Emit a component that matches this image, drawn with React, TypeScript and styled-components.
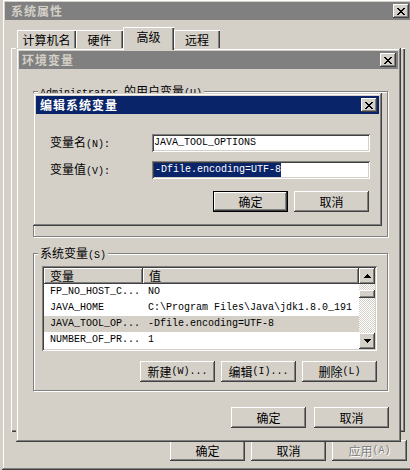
import { FunctionComponent, ReactNode } from "react";
import styled, { createGlobalStyle, css } from "styled-components";

const FACE = "#d4d0c8";
const SHADOW = "#808080";
const DARK = "#404040";
const NAVY = "#0a246a";
const CJK = `"Noto Sans CJK SC", "Liberation Sans", sans-serif`;
const MONO = `"Liberation Mono", "Noto Sans CJK SC", monospace`;

const GlobalStyle = createGlobalStyle`
  body {
    margin: 0;
    background: ${FACE};
    font-family: ${CJK};
    font-size: 12px;
    color: #000;
  }
`;

// classic 3D borders
const frameBevel = css`
  box-shadow: inset -1px -1px ${DARK}, inset 1px 1px ${FACE},
    inset -2px -2px ${SHADOW}, inset 2px 2px #fff;
`;
const buttonBevel = css`
  box-shadow: inset -1px -1px ${DARK}, inset 1px 1px #fff,
    inset -2px -2px ${SHADOW}, inset 2px 2px ${FACE};
`;
const sunkenBevel = css`
  box-shadow: inset 1px 1px ${SHADOW}, inset -1px -1px #fff,
    inset 2px 2px ${DARK}, inset -2px -2px ${FACE};
`;

const Desktop = styled.div`
  position: relative;
  width: 410px;
  height: 470px;
  overflow: hidden;
`;

interface WindowProps {
  $x: number;
  $y: number;
  $w: number;
  $h: number;
}

const Window = styled.div<WindowProps>`
  position: absolute;
  left: ${({ $x }) => $x}px;
  top: ${({ $y }) => $y}px;
  width: ${({ $w }) => $w}px;
  height: ${({ $h }) => $h}px;
  box-sizing: border-box;
  padding: 3px;
  background: ${FACE};
  display: flex;
  flex-direction: column;
  ${frameBevel}
`;

const TitleBar = styled.div<{ $active?: boolean; $indent: number }>`
  flex: none;
  height: 18px;
  display: flex;
  align-items: center;
  justify-content: space-between;
  padding: 0 2px 0 ${({ $indent }) => $indent}px;
  background: ${({ $active }) => ($active ? NAVY : SHADOW)};
  color: ${({ $active }) => ($active ? "#fff" : FACE)};
`;

const TitleText = styled.span`
  font-weight: bold;
  font-size: 12px;
  line-height: 18px;
  letter-spacing: 1px;
`;

const CloseButton = styled.div`
  width: 16px;
  height: 14px;
  box-sizing: border-box;
  background: ${FACE};
  display: flex;
  align-items: center;
  justify-content: center;
  ${buttonBevel}
`;

const X_BITMAP = [
  "XX....XX",
  ".XX..XX.",
  "..XXXX..",
  "...XX...",
  "..XXXX..",
  ".XX..XX.",
  "XX....XX",
];

const CloseGlyph = () => (
  <svg width="8" height="7" viewBox="0 0 8 7" shapeRendering="crispEdges">
    {X_BITMAP.flatMap((row, y) =>
      row.split("").map((c, x) =>
        c === "X" ? <rect key={`${x}-${y}`} x={x} y={y} width="1" height="1" fill="#000" /> : null
      )
    )}
  </svg>
);

const Mono = styled.span`
  font-family: ${MONO};
  font-size: 10px;
`;

const Button = styled.div<{ $default?: boolean; $disabled?: boolean }>`
  width: 75px;
  height: 21px;
  box-sizing: border-box;
  background: ${FACE};
  display: flex;
  align-items: center;
  justify-content: center;
  font-size: 12px;
  line-height: 14px;
  white-space: nowrap;
  color: ${({ $disabled }) => ($disabled ? SHADOW : "#000")};
  text-shadow: ${({ $disabled }) => ($disabled ? "1px 1px #fff" : "none")};
  ${({ $default }) =>
    $default
      ? css`
          box-shadow: inset 0 0 0 1px #000, inset -2px -2px ${DARK},
            inset 2px 2px #fff, inset -3px -3px ${SHADOW};
        `
      : buttonBevel}
`;

const ButtonRow = styled.div<{ $gap: number; $right: number; $top: number }>`
  display: flex;
  justify-content: flex-end;
  gap: ${({ $gap }) => $gap}px;
  padding-right: ${({ $right }) => $right}px;
  margin-top: ${({ $top }) => $top}px;
`;

/* ---------- outer 系统属性 window ---------- */

const TabStrip = styled.div`
  display: flex;
  align-items: flex-end;
  margin: 7px 0 -2px 12px;
  height: 23px;
  position: relative;
  z-index: 1;
`;

const Tab = styled.div<{ $active?: boolean; $w: number }>`
  width: ${({ $w }) => $w}px;
  height: ${({ $active }) => ($active ? 23 : 18)}px;
  box-sizing: border-box;
  background: ${FACE};
  display: flex;
  justify-content: center;
  padding-top: 3px;
  font-size: 12px;
  line-height: 14px;
  margin-bottom: ${({ $active }) => ($active ? 0 : 2)}px;
  box-shadow: inset 1px 1px #fff, inset -1px 0 ${DARK}, inset -2px 0 ${SHADOW};
`;

const TabPanel = styled.div`
  height: 384px;
  margin: 0 6px;
  background: ${FACE};
  box-shadow: inset 1px 1px #fff, inset -1px -1px ${DARK}, inset -2px -2px ${SHADOW};
`;

/* ---------- 环境变量 window ---------- */

const EnvBody = styled.div`
  display: flex;
  flex-direction: column;
  padding: 22px 0 12px 0;
`;

const Group = styled.div<{ $h: number; $top?: number }>`
  position: relative;
  height: ${({ $h }) => $h}px;
  box-sizing: border-box;
  margin: ${({ $top }) => $top ?? 0}px 10px 0 14px;
  border: 1px solid ${SHADOW};
  box-shadow: inset 1px 1px #fff, 1px 1px #fff;
  display: flex;
  flex-direction: column;
  padding: 12px 10px 8px 8px;
`;

const Caption = styled.span`
  position: absolute;
  top: -8px;
  left: 4px;
  padding: 0 2px;
  background: ${FACE};
  line-height: 14px;
  font-size: 12px;
  white-space: nowrap;
`;

const ListBox = styled.div`
  height: 85px;
  box-sizing: border-box;
  padding: 2px;
  background: #fff;
  display: flex;
  ${sunkenBevel}
`;

const ListMain = styled.div`
  flex: 1;
  display: flex;
  flex-direction: column;
  overflow: hidden;
`;

const HeaderRow = styled.div`
  display: grid;
  grid-template-columns: 99px 1fr;
  height: 16px;
  background: ${FACE};
`;

const HeaderCell = styled.div`
  padding-left: 6px;
  font-size: 12px;
  line-height: 15px;
  ${buttonBevel}
`;

const Row = styled.div<{ $selected?: boolean }>`
  display: grid;
  grid-template-columns: 99px 1fr;
  height: 16px;
  background: ${({ $selected }) => ($selected ? FACE : "#fff")};
  font-family: ${MONO};
  font-size: 10px;
  line-height: 16px;
  white-space: nowrap;
`;

const Cell = styled.div<{ $pad: number }>`
  padding-left: ${({ $pad }) => $pad}px;
  overflow: hidden;
`;

const ScrollBar = styled.div`
  width: 16px;
  display: flex;
  flex-direction: column;
`;

const ScrollButton = styled.div`
  height: 16px;
  background: ${FACE};
  display: flex;
  align-items: center;
  justify-content: center;
  ${buttonBevel}
`;

const Track = styled.div`
  flex: 1;
  background: repeating-conic-gradient(${FACE} 0 25%, #fff 0 50%) 0 0 / 2px 2px;
  padding-top: 6px;
`;

const Thumb = styled.div`
  height: 8px;
  background: ${FACE};
  ${buttonBevel}
`;

const Arrow = ({ down }: { down?: boolean }) => (
  <svg width="7" height="4" viewBox="0 0 7 4" shapeRendering="crispEdges">
    <path d={down ? "M0 0h7L3.5 4z" : "M0 4h7L3.5 0z"} fill="#000" />
  </svg>
);

/* ---------- 编辑系统变量 dialog ---------- */

const DialogBody = styled.div`
  display: flex;
  flex-direction: column;
  padding: 20px 0 0 14px;
`;

const FieldRow = styled.div<{ $top: number }>`
  display: flex;
  align-items: center;
  margin-top: ${({ $top }) => $top}px;
`;

const Label = styled.div`
  width: 102px;
  font-size: 12px;
  line-height: 14px;
`;

const TextBox = styled.div`
  width: 218px;
  height: 18px;
  box-sizing: border-box;
  padding: 2px 0 0 2px;
  background: #fff;
  font-family: ${MONO};
  font-size: 10px;
  line-height: 14px;
  white-space: nowrap;
  overflow: hidden;
  ${sunkenBevel}
`;

const Selected = styled.span`
  display: inline-block;
  background: ${NAVY};
  color: #fff;
  padding-left: 1px;
`;

interface TitleProps {
  title: string;
  active?: boolean;
  indent: number;
}

const Title: FunctionComponent<TitleProps> = ({ title, active, indent }) => (
  <TitleBar $active={active} $indent={indent}>
    <TitleText>{title}</TitleText>
    <CloseButton>
      <CloseGlyph />
    </CloseButton>
  </TitleBar>
);

const Text = ({ cjk, latin }: { cjk: string; latin?: ReactNode }) => (
  <>
    {cjk}
    {latin && <Mono>{latin}</Mono>}
  </>
);

const rows = [
  { name: "FP_NO_HOST_C...", value: "NO" },
  { name: "JAVA_HOME", value: "C:\\Program Files\\Java\\jdk1.8.0_191" },
  { name: "JAVA_TOOL_OP...", value: "-Dfile.encoding=UTF-8", selected: true },
  { name: "NUMBER_OF_PR...", value: "1" },
];

const tabs = [
  { label: "计算机名", w: 59 },
  { label: "硬件", w: 47 },
  { label: "高级", w: 51, active: true },
  { label: "远程", w: 46 },
];

export default function App() {
  return (
    <>
      <GlobalStyle />
      <Desktop>
        <Window $x={2} $y={-1} $w={412} $h={471}>
          <Title title="系统属性" indent={6} />
          <TabStrip>
            {tabs.map((t) => (
              <Tab key={t.label} $w={t.w} $active={t.active}>
                {t.label}
              </Tab>
            ))}
          </TabStrip>
          <TabPanel />
          <ButtonRow $gap={6} $right={4} $top={8}>
            <Button>确定</Button>
            <Button>取消</Button>
            <Button $disabled>
              <Text cjk="应用" latin="(A)" />
            </Button>
          </ButtonRow>
        </Window>

        <Window $x={16} $y={48} $w={385} $h={394}>
          <Title title="环境变量" indent={3} />
          <EnvBody>
            <Group $h={146}>
              <Caption>
                <Mono>Administrator </Mono>的用户变量<Mono>(U)</Mono>
              </Caption>
            </Group>
            <Group $h={138} $top={16}>
              <Caption>
                <Text cjk="系统变量" latin="(S)" />
              </Caption>
              <ListBox>
                <ListMain>
                  <HeaderRow>
                    <HeaderCell>变量</HeaderCell>
                    <HeaderCell>值</HeaderCell>
                  </HeaderRow>
                  {rows.map((r) => (
                    <Row key={r.name} $selected={r.selected}>
                      <Cell $pad={6}>{r.name}</Cell>
                      <Cell $pad={5}>{r.value}</Cell>
                    </Row>
                  ))}
                </ListMain>
                <ScrollBar>
                  <ScrollButton>
                    <Arrow />
                  </ScrollButton>
                  <Track>
                    <Thumb />
                  </Track>
                  <ScrollButton>
                    <Arrow down />
                  </ScrollButton>
                </ScrollBar>
              </ListBox>
              <ButtonRow $gap={6} $right={-1} $top={10}>
                <Button>
                  <Text cjk="新建" latin="(W)..." />
                </Button>
                <Button>
                  <Text cjk="编辑" latin="(I)..." />
                </Button>
                <Button>
                  <Text cjk="删除" latin="(L)" />
                </Button>
              </ButtonRow>
            </Group>
            <ButtonRow $gap={8} $right={9} $top={16}>
              <Button>确定</Button>
              <Button>取消</Button>
            </ButtonRow>
          </EnvBody>
        </Window>

        <Window $x={33} $y={93} $w={349} $h={133}>
          <Title title="编辑系统变量" active indent={4} />
          <DialogBody>
            <FieldRow $top={0}>
              <Label>
                <Text cjk="变量名" latin="(N):" />
              </Label>
              <TextBox>JAVA_TOOL_OPTIONS</TextBox>
            </FieldRow>
            <FieldRow $top={9}>
              <Label>
                <Text cjk="变量值" latin="(V):" />
              </Label>
              <TextBox>
                <Selected>-Dfile.encoding=UTF-8</Selected>
              </TextBox>
            </FieldRow>
            <ButtonRow $gap={6} $right={10} $top={12}>
              <Button $default>确定</Button>
              <Button>取消</Button>
            </ButtonRow>
          </DialogBody>
        </Window>
      </Desktop>
    </>
  );
}
